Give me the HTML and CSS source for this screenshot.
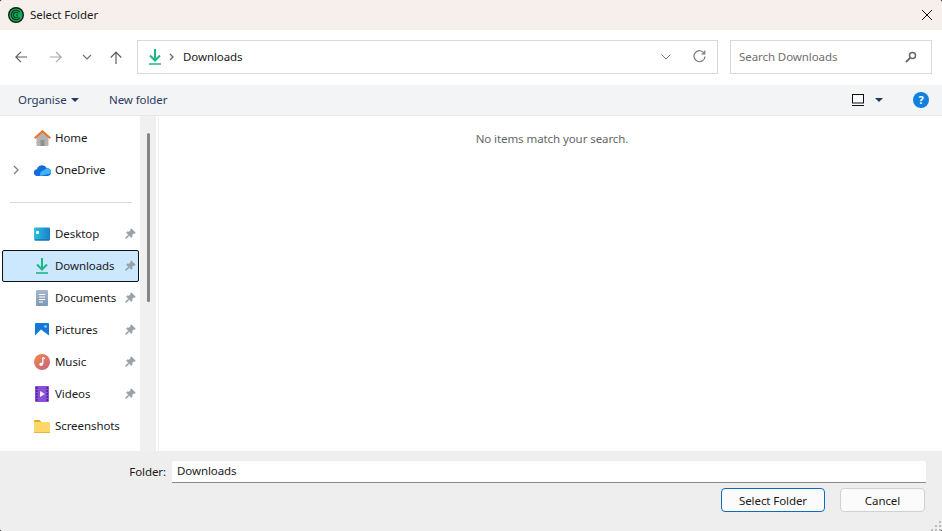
FILE: index.html
```html
<!DOCTYPE html>
<html lang="en">
<head>
<meta charset="utf-8">
<title>Select Folder</title>
<link rel="stylesheet" href="styles.css">
</head>
<body>
<div class="dialog">
  <header class="titlebar">
    <div class="title-left">
      <svg class="app-icon" width="16" height="16" viewBox="0 0 16 16"><circle cx="8" cy="8" r="8" fill="#0c1f16"/><circle cx="8" cy="8" r="6.600" fill="#17a85a"/><path d="M11.800 5.200A4.700 4.700 0 1 0 11.800 10.800M10.200 6.300A2.700 2.700 0 1 0 10.200 9.700M8 8h2" fill="none" stroke="#0a3520" stroke-width="1.100"/></svg>
      <span>Select Folder</span>
    </div>
    <svg class="close" width="12" height="12" viewBox="0 0 12 12"><path d="M1 1l10 10M11 1L1 11" stroke="#111" stroke-width="1"/></svg>
  </header>

  <div class="navrow">
    <div class="nav-buttons">
      <svg class="nb nb-back" width="12" height="12" viewBox="0 0 12 12"><path d="M12 6H1M6 .8L.8 6 6 11.200" fill="none" stroke="#5f5f5f" stroke-width="1.200"/></svg>
      <svg class="nb nb-fwd" width="12" height="12" viewBox="0 0 12 12"><path d="M0 6h11M6 .8L11.200 6 6 11.200" fill="none" stroke="#a8a8a8" stroke-width="1.200"/></svg>
      <svg class="nb nb-down" width="10" height="6" viewBox="0 0 10 6"><path d="M1 1l4 4 4-4" fill="none" stroke="#707070" stroke-width="1.200"/></svg>
      <svg class="nb nb-up" width="12" height="13" viewBox="0 0 12 13"><path d="M6 13V1.200M.8 6.500L6 1.200 11.200 6.500" fill="none" stroke="#5f5f5f" stroke-width="1.200"/></svg>
    </div>
    <div class="address">
      <svg class="dl-icon" width="14" height="16" viewBox="0 0 14 16"><path d="M7 0V11M2 6.500L7 11.500 12 6.500" fill="none" stroke="#1cb784" stroke-width="2"/><path d="M1 15h12" stroke="#1cb784" stroke-width="1.600"/></svg>
      <svg class="crumb" width="5" height="8" viewBox="0 0 5 8"><path d="M1 1l3 3-3 3" fill="none" stroke="#666" stroke-width="1.300"/></svg>
      <span class="crumb-text">Downloads</span>
      <svg class="addr-down" width="10" height="6" viewBox="0 0 10 6"><path d="M.5.500L5 5 9.500.500" fill="none" stroke="#777" stroke-width="1"/></svg>
      <svg class="refresh" width="13" height="13" viewBox="0 0 13 13"><path d="M11.300 3.500A5.500 5.500 0 1 0 12 6.500" fill="none" stroke="#7a7a7a" stroke-width="1.200"/><path d="M8.500 3.800h3.300V.6" fill="none" stroke="#7a7a7a" stroke-width="1.200"/></svg>
    </div>
    <div class="search">
      <span>Search Downloads</span>
      <svg width="12" height="12" viewBox="0 0 12 12"><circle cx="7.500" cy="4.500" r="3" fill="none" stroke="#666" stroke-width="1.500"/><path d="M5.200 6.800L1 11" stroke="#666" stroke-width="1.800"/></svg>
    </div>
  </div>

  <div class="cmdbar">
    <div class="cmd-left">
      <span class="cmd-organise">Organise<i class="caret"></i></span>
      <span class="cmd-new">New folder</span>
    </div>
    <div class="cmd-right">
      <span class="view-btn"><svg width="12" height="12" viewBox="0 0 12 12"><rect x=".5" y=".5" width="11" height="8.500" fill="none" stroke="#111"/><path d="M0 11.500h12" stroke="#111"/></svg></span>
      <i class="caret view-caret"></i>
      <span class="help">?</span>
    </div>
  </div>

  <main class="main">
    <nav class="sidebar">
      <div class="item">
        <span class="ic"><svg width="17" height="16" viewBox="0 0 17 16"><path d="M2.500 7v8a1 1 0 0 0 1 1h10a1 1 0 0 0 1-1V7L8.500 1.500z" fill="#b3b3b3"/><rect x="6.500" y="10" width="4" height="6" fill="#8f8f8f"/><path d="M.7 8.200L8.500 1.200 16.300 8.200" fill="none" stroke="#e8762a" stroke-width="2"/></svg></span>
        <span class="label">Home</span>
      </div>
      <div class="item">
        <svg class="expander" width="6" height="10" viewBox="0 0 6 10"><path d="M1 1l4 4-4 4" fill="none" stroke="#808080" stroke-width="1.300"/></svg>
        <span class="ic"><svg width="17" height="11" viewBox="0 0 17 11"><path d="M3.500 11A3.300 3.300 0 0 1 3 4.200 5.300 5.300 0 0 1 12.800 3.200 3.900 3.900 0 0 1 13.500 11z" fill="#1669d8"/><path d="M6 11l10.700-2.500A3.700 3.700 0 0 0 12.500 3.500L6.500 7z" fill="#3bb6f4"/></svg></span>
        <span class="label">OneDrive</span>
      </div>
      <div class="sep"></div>
      <div class="item">
        <span class="ic"><svg width="16" height="14" viewBox="0 0 16 14"><defs><linearGradient id="dg" x1="0" y1="0" x2="1" y2="0"><stop offset="0" stop-color="#2bc0dc"/><stop offset="1" stop-color="#1a7fd0"/></linearGradient></defs><rect width="16" height="13" y=".5" rx="1" fill="url(#dg)"/><rect x="2" y="4" width="3" height="3" fill="#d6f3fa"/><path d="M1 13h14" stroke="#0f5f9c"/></svg></span>
        <span class="label">Desktop</span>
        <svg class="pin" viewBox="0 0 11 11" width="11" height="11"><use href="#pin"/></svg>
      </div>
      <div class="item selected">
        <span class="ic"><svg width="14" height="16" viewBox="0 0 14 16"><path d="M7 0V11M2 6.500L7 11.500 12 6.500" fill="none" stroke="#1cb784" stroke-width="2"/><path d="M1 15h12" stroke="#1cb784" stroke-width="1.600"/></svg></span>
        <span class="label">Downloads</span>
        <svg class="pin" viewBox="0 0 11 11" width="11" height="11"><use href="#pin"/></svg>
      </div>
      <div class="item">
        <span class="ic"><svg width="12" height="16" viewBox="0 0 12 16"><defs><linearGradient id="docg" x1="0" y1="0" x2="0" y2="1"><stop offset="0" stop-color="#a9b8cc"/><stop offset="1" stop-color="#7d97b8"/></linearGradient></defs><rect width="12" height="16" rx="1" fill="url(#docg)"/><path d="M3 4.500h6M3 7h6M3 9.500h6M3 12h4" stroke="#fff" fill="none"/></svg></span>
        <span class="label">Documents</span>
        <svg class="pin" viewBox="0 0 11 11" width="11" height="11"><use href="#pin"/></svg>
      </div>
      <div class="item">
        <span class="ic"><svg width="14" height="14" viewBox="0 0 14 14"><rect width="14" height="14" rx="1" fill="#1478d8"/><path d="M0 12.500L6 6.500 14 12.500V14H0z" fill="#fff"/><circle cx="10.500" cy="3.500" r="1.300" fill="#9fd4fa"/></svg></span>
        <span class="label">Pictures</span>
        <svg class="pin" viewBox="0 0 11 11" width="11" height="11"><use href="#pin"/></svg>
      </div>
      <div class="item">
        <span class="ic"><svg width="16" height="16" viewBox="0 0 16 16"><defs><linearGradient id="mg" x1="0" y1="0" x2="1" y2="1"><stop offset="0" stop-color="#ee8a45"/><stop offset="1" stop-color="#c95f88"/></linearGradient></defs><circle cx="8" cy="8" r="8" fill="url(#mg)"/><path d="M8.800 3.500v6.500" stroke="#fff" stroke-width="1.300"/><path d="M8.800 3.500l2.200 1.200" stroke="#fff" stroke-width="1.200"/><circle cx="7.200" cy="10.300" r="1.800" fill="#fff"/></svg></span>
        <span class="label">Music</span>
        <svg class="pin" viewBox="0 0 11 11" width="11" height="11"><use href="#pin"/></svg>
      </div>
      <div class="item">
        <span class="ic"><svg width="14" height="16" viewBox="0 0 14 16"><rect width="14" height="16" rx="1" fill="#8a4ed8"/><path d="M1 2h1.500M1 5h1.500M1 8h1.500M1 11h1.500M1 14h1.500M11.500 2H13M11.500 5H13M11.500 8H13M11.500 11H13M11.500 14H13" stroke="#3b1a78" stroke-width="1.400"/><path d="M5 5l5 3-5 3z" fill="#f2ecff"/></svg></span>
        <span class="label">Videos</span>
        <svg class="pin" viewBox="0 0 11 11" width="11" height="11"><use href="#pin"/></svg>
      </div>
      <div class="item">
        <span class="ic"><svg width="16" height="13" viewBox="0 0 16 13"><path d="M0 1a1 1 0 0 1 1-1h4.500L7.500 2H0z" fill="#e8a820"/><rect y="2" width="16" height="11" rx="1" fill="#ffd768"/><path d="M0 12.500h16" stroke="#e8b63c"/></svg></span>
        <span class="label">Screenshots</span>
      </div>
      <svg class="defs" width="0" height="0"><defs><g id="pin"><path d="M6.200 .3L10.700 4.800 9.600 5.700 8.800 5.400 7.200 7 7.400 8.800 6.300 9.800 1.200 4.700 2.200 3.600 4 3.800 5.600 2.200 5.300 1.400z" fill="#9aa1a8"/><path d="M3.800 7.200L.6 10.400" stroke="#9aa1a8" stroke-width="1.500"/></g></defs></svg>
    </nav>
    <div class="scrollbar"><div class="thumb"></div></div>
    <section class="content"><p class="empty">No items match your search.</p></section>
  </main>

  <footer class="footer">
    <div class="folder-row">
      <label class="folder-label">Folder:</label>
      <div class="folder-input">Downloads</div>
    </div>
    <div class="actions">
      <button class="btn primary">Select Folder</button>
      <button class="btn">Cancel</button>
    </div>
    <svg class="grip" width="11" height="11" viewBox="0 0 11 11"><path d="M8 1h2v2H8zM4 5h2v2H4zM8 5h2v2H8zM0 9h2v2H0zM4 9h2v2H4zM8 9h2v2H8z" fill="#bdbdbd"/></svg>
  </footer>
</div>
</body>
</html>
```

FILE: styles.css
```css
* { box-sizing: border-box; }
html, body { margin: 0; padding: 0; }
body { width: 942px; height: 531px; overflow: hidden; background: #222; font-family: "Noto Sans", "Open Sans", sans-serif; font-size: 11.5px; letter-spacing: -0.08px; color: #1a1a1a; }
svg { display: block; flex: none; }
.dialog { position: relative; width: 942px; height: 531px; display: flex; flex-direction: column; border-radius: 3px; overflow: hidden; background: #fff; }

.titlebar { height: 30px; background: #f7efec; display: flex; align-items: center; justify-content: space-between; padding: 0 9px 0 8px; }
.title-left { display: flex; align-items: center; gap: 6px; }
.title-left span { color: #222; position: relative; top: -1px; }
.close { margin-bottom: 1px; }

.navrow { height: 55px; background: #fff; display: flex; align-items: center; padding: 0 10px 1px 15px; }
.nav-buttons { width: 122px; height: 16px; display: flex; align-items: center; flex: none; }
.nb-back { margin-right: 23px; }
.nb-fwd { margin-right: 20px; }
.nb-down { margin-right: 18px; }
.address { width: 581px; height: 34px; border: 1px solid #d9d9d9; display: flex; align-items: center; padding: 0 11px 1px 10px; flex: none; }
.dl-icon { margin-right: 7px; }
.crumb { margin-right: 9px; }
.crumb-text { flex: 1; color: #1a1a1a; }
.addr-down { margin-right: 22px; }
.search { width: 202px; height: 34px; margin-left: 12px; border: 1px solid #d9d9d9; display: flex; align-items: center; justify-content: space-between; padding: 0 14px 1px 8px; color: #6f6f6f; flex: none; }

.cmdbar { height: 31px; background: #f3f4f6; border-bottom: 1px solid #e8e8e8; display: flex; align-items: center; justify-content: space-between; padding: 0 13px 1px 18px; color: #2b3a5c; }
.cmd-left { display: flex; align-items: center; }
.cmd-organise { display: flex; align-items: center; width: 91px; }
.caret { width: 0; height: 0; border-left: 4px solid transparent; border-right: 4px solid transparent; border-top: 4px solid #1f3864; margin-left: 4px; display: block; }
.cmd-right { display: flex; align-items: center; }
.view-btn { margin-right: 7px; background: #fafafa; }
.view-caret { margin: 0 30px 0 4px; }
.help { width: 16px; height: 16px; border-radius: 50%; background: #1181dd; color: #fff; font-size: 11px; font-weight: 700; display: flex; align-items: center; justify-content: center; }

.main { flex: 1; display: flex; min-height: 0; background: #fff; }
.sidebar { width: 140px; padding: 6px 1px 0 2px; }
.item { position: relative; height: 32px; display: flex; align-items: center; color: #1a1a1a; }
.ic { position: absolute; left: 30px; width: 20px; display: flex; justify-content: center; }
.label { position: absolute; left: 53px; top: 8px; }
.pin { position: absolute; right: 3px; top: 10px; }
.expander { position: absolute; left: 11px; }
.sep { height: 1px; background: #d9d9d9; margin: 16px 7px 15px 8px; }
.selected { background: #cce8ff; outline: 1px solid #111; outline-offset: -1px; border-radius: 2px; }
.scrollbar { width: 16px; background: #f0f0f0; padding: 17px 0 0 7px; }
.thumb { width: 3px; height: 169px; background: #858585; border-radius: 2px; }
.content { flex: 1; margin-left: 2px; border-left: 1px solid #f0f0f0; }
.empty { margin: 15px 0 0; text-align: center; color: #666; padding-left: 3px; }

.footer { position: relative; height: 80px; background: #eeeeee; padding: 10px 16px 0 0; }
.folder-row { display: flex; align-items: center; height: 22px; }
.folder-label { width: 166px; text-align: right; color: #1a1a1a; margin-right: 6px; position: relative; top: -1px; }
.folder-input { flex: 1; height: 22px; background: #fff; border-bottom: 1px solid #8a8a8a; border-radius: 2px 2px 0 0; padding: 0 5px; line-height: 19px; }
.actions { display: flex; justify-content: flex-end; gap: 15px; margin: 5px 1px 0 0; }
.btn { height: 24px; width: 85px; border: 1px solid #d0d0d0; border-radius: 4px; background: #fbfbfb; font: inherit; letter-spacing: inherit; color: #1a1a1a; padding: 0; }
.primary { width: 104px; border-color: #0f6cbd; }
.grip { position: absolute; right: 0; bottom: 0; }
```
